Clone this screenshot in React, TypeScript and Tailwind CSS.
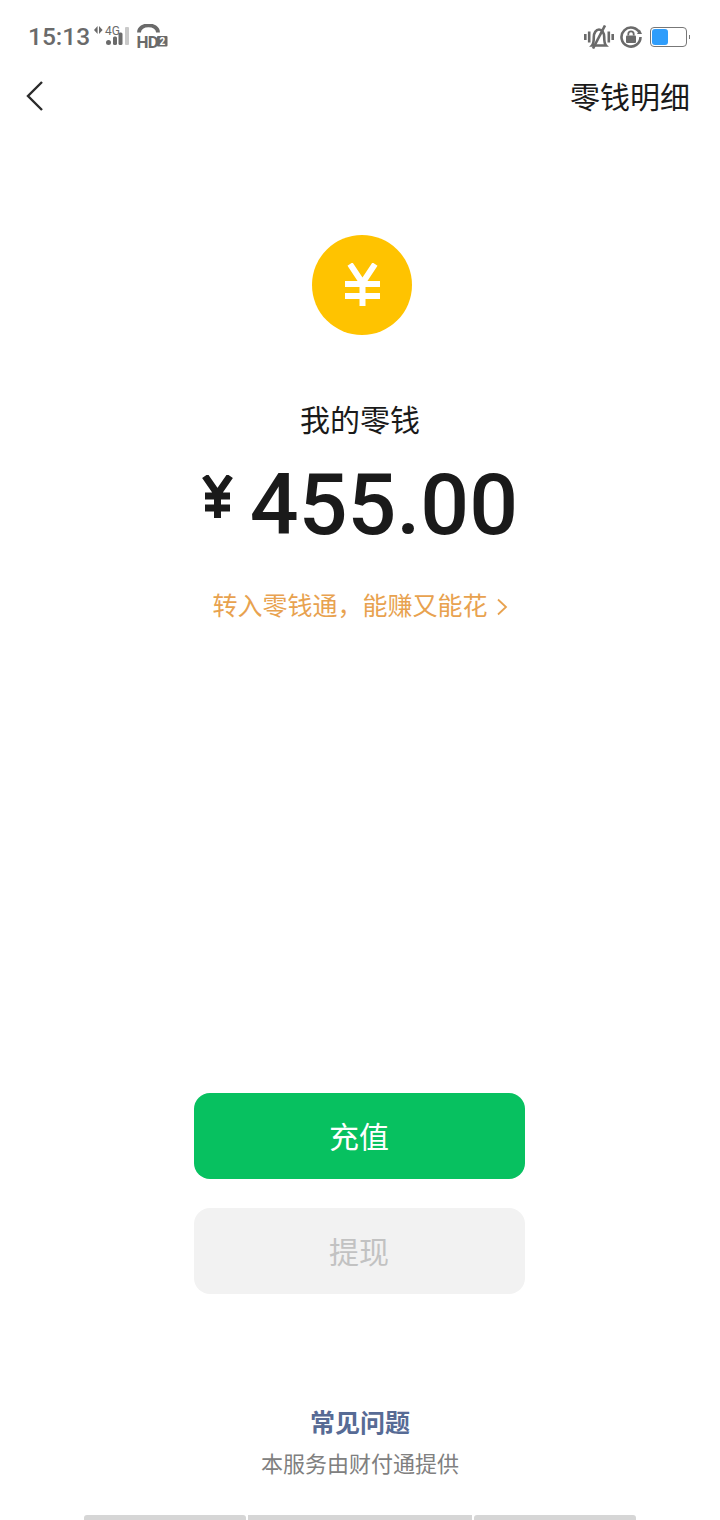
import React from 'react';

const CJK = "font-['Roboto','Noto_Sans_CJK_SC',sans-serif]";

const StatusBar = () => (
  <div className="h-[74px] flex items-center justify-between pl-[28px] pr-[30px] text-[#6a6a6a]">
    <div className="flex items-center">
      <span className="w-[62px] text-[24.5px] font-medium leading-none font-['Roboto',sans-serif]">15:13</span>
      {/* 신호 */}
      <div className="relative w-[36px] h-[26px] ml-[4px]">
        <svg viewBox="0 0 36 26" className="w-[36px] h-[26px]" fill="currentColor">
          <path d="M3.600 2v8L0 6zM5 2v8l3.600-4z" />
          <circle cx="14.500" cy="18.500" r="2.500" />
          <rect x="19" y="12.500" width="4" height="8.500" rx="1.500" />
          <rect x="24.500" y="8.500" width="4" height="12.500" rx="1.500" />
          <rect x="31" y="3" width="4" height="18" rx="1" fill="#c9c9c9" />
        </svg>
        <span className="absolute left-[11px] top-[1px] text-[12px] leading-none font-['Roboto',sans-serif]">4G</span>
      </div>
      {/* HD */}
      <div className="relative w-[33px] h-[26px] ml-[5px]">
        <svg viewBox="0 0 33 26" className="w-[33px] h-[26px]" fill="none">
          <path d="M4 8.500 C4 -1 23 -1 23 8.500" stroke="currentColor" strokeWidth="3.800" />
          <rect x="22" y="12" width="10.500" height="10.500" rx="1" fill="currentColor" />
        </svg>
        <span className="absolute left-[1.500px] top-[9.500px] text-[17px] font-bold leading-none tracking-[-0.8px] font-['Roboto',sans-serif]">HD</span>
        <span className="absolute left-[24.500px] top-[12.500px] text-[10px] font-bold leading-none text-white font-['Roboto',sans-serif]">2</span>
      </div>
    </div>
    <div className="flex items-center">
      {/* 진동 */}
      <svg viewBox="0 0 30 24" className="w-[30px] h-[24px]" fill="none" stroke="currentColor" strokeWidth="2.600">
        <path d="M1.300 9v6M5.200 6.500v11M24.800 6.500v11M28.700 9v6" />
        <path d="M8 20.500c1.800-2 1.800-5 1.800-8.500 0-4 2.200-7.500 5.200-7.500s5.200 3.500 5.200 7.500c0 3.500 0 6.500 1.800 8.500z" />
        <path d="M9 23.500 21 .5" />
      </svg>
      <svg viewBox="0 0 22 22" className="w-[22px] h-[22px] ml-[6px]" fill="none">
        <path d="M19.800 7.500A9.500 9.500 0 1 0 20.500 11" stroke="currentColor" strokeWidth="2.600" />
        <path d="M17 8h5l-2.200-4.500z" fill="currentColor" />
        <rect x="6" y="9.500" width="10" height="7.500" rx="1" fill="currentColor" />
        <path d="M8.300 9.500V8a2.700 2.700 0 0 1 5.400 0v1.500" stroke="currentColor" strokeWidth="1.800" />
      </svg>
      {/* 배터리 */}
      <div className="flex items-center ml-[8px]">
        <div className="w-[37px] h-[20px] rounded-[4px] border border-[#777777] p-[1px]">
          <div className="w-[16px] h-full rounded-[3px] bg-[#2f9dfb]" />
        </div>
        <div className="w-[1.500px] h-[4px] bg-[#777777] ml-[2px]" />
      </div>
    </div>
  </div>
);

const App = () => {
  return (
    <div className={`w-[720px] h-[1520px] bg-white flex flex-col overflow-hidden ${CJK}`}>
      <StatusBar />

      {/* 헤더 */}
      <div className="h-[44px] flex items-center justify-between pl-[25px] pr-[30px]">
        <svg viewBox="0 0 20 32" className="w-[20px] h-[32px]" fill="none" stroke="#2b2b2b" strokeWidth="2.400">
          <path d="M17 2 3 16l14 14" />
        </svg>
        <span className="pt-[3px] text-[30px] leading-none text-[#1a1a1a]">零钱明细</span>
      </div>

      {/* 코인 */}
      <div className="flex flex-col items-center mt-[117px]">
        <div className="ml-[4px] w-[100px] h-[100px] rounded-full bg-[#ffc300] flex items-center justify-center">
          <svg viewBox="0 0 37 43" className="w-[37px] h-[43px] -mt-[1px]" fill="none" stroke="white" strokeWidth="6">
            <path d="M6 1 18.500 20 31 1M18.500 20v23M1 21h35M1 33h35" />
          </svg>
        </div>
        <div className="mt-[70px] text-[30px] leading-[32px] text-[#1a1a1a]">我的零钱</div>
        <div className="mt-[24px] flex items-start text-[#1a1a1a] h-[88px]">
          <svg viewBox="0 0 31 43" className="w-[31px] h-[43px] mt-[14px] mr-[17px]" fill="none" stroke="#1a1a1a" strokeWidth="7">
            <path d="M3 1 15.500 19 28 1M15.500 19v24M3 21h25M3 33h25" />
          </svg>
          <span className="text-[86px] font-medium leading-[88px] font-['Roboto',sans-serif]">455.00</span>
        </div>
        <div className="mt-[43px] flex items-center text-[#e8a24f]">
          <span className="text-[25px] leading-[30px]">转入零钱通，能赚又能花</span>
          <svg viewBox="0 0 12 18" className="w-[12px] h-[18px] ml-[8px]" fill="none" stroke="#e8a24f" strokeWidth="1.800">
            <path d="M2 1.500 10 9l-8 7.500" />
          </svg>
        </div>
      </div>

      {/* 버튼 */}
      <div className="flex flex-col items-center gap-[29px] mt-[471px] pr-[2px]">
        <div className="w-[331px] h-[86px] pt-[3px] rounded-[16px] bg-[#07c160] flex items-center justify-center text-[30px] text-white">充值</div>
        <div className="w-[331px] h-[86px] pt-[3px] rounded-[16px] bg-[#f2f2f2] flex items-center justify-center text-[30px] text-[#c2c2c2]">提现</div>
      </div>

      {/* 하단 */}
      <div className="flex flex-col items-center mt-[115px]">
        <div className="text-[25px] leading-[30px] font-semibold text-[#576b95]">常见问题</div>
        <div className="mt-[12px] text-[22px] leading-[28px] text-[#808080]">本服务由财付通提供</div>
      </div>
      <div className="flex justify-center gap-[2px] mt-[36px]">
        <div className="w-[162px] h-[5px] rounded-t-[3px] bg-[#d6d6d6]" />
        <div className="w-[224px] h-[5px] bg-[#d6d6d6]" />
        <div className="w-[162px] h-[5px] rounded-t-[3px] bg-[#d6d6d6]" />
      </div>
    </div>
  );
};

export default App;
